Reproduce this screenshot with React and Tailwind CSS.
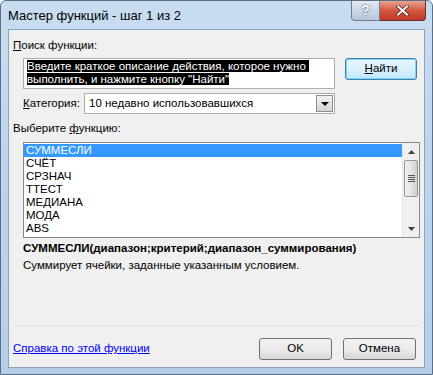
import React from "react";

const F = { fontFamily: '"Liberation Sans", Arial, sans-serif' };

function ArrowUp() {
  return (
    <svg width="7" height="4" viewBox="0 0 7 4"><path d="M0 4 L3.5 0 L7 4 Z" fill="#404040" /></svg>
  );
}
function ArrowDown() {
  return (
    <svg width="7" height="4" viewBox="0 0 7 4"><path d="M0 0 L3.5 4 L7 0 Z" fill="#404040" /></svg>
  );
}

export default function App() {
  const items = ["СУММЕСЛИ", "СЧЁТ", "СРЗНАЧ", "ТТЕСТ", "МЕДИАНА", "МОДА", "ABS"];
  return (
    <div className="w-[433px] h-[375px] bg-white" style={F}>
      <div className="relative w-[433px] h-[375px] rounded-t-[6px] border border-[#5a6f86] bg-gradient-to-b from-[#c9ddf1] via-[#bcd3ec] to-[#b6cfe9] text-[11.5px] text-black">
        {/* title bar */}
        <div className="flex h-[28px] items-start">
          <div className="pl-[7px] pt-[7px] text-[13px] leading-[16px] text-black whitespace-nowrap">Мастер функций - шаг 1 из 2</div>
          <div className="ml-auto mr-[6px] flex h-[20px]">
            <div className="flex w-[29px] items-center justify-center rounded-bl-[4px] border border-t-0 border-[#6f7f92] bg-gradient-to-b from-[#e3ebf4] via-[#cbd7e4] to-[#b7c7d9] text-[14px] font-bold text-white [text-shadow:0_0_2px_#333]">?</div>
            <div className="flex w-[46px] items-center justify-center rounded-br-[4px] border border-t-0 border-l-0 border-[#6e2a24] bg-gradient-to-b from-[#e8a493] via-[#d2553f] to-[#c0392b]">
              <svg width="13" height="11" viewBox="0 0 13 11">
                <path d="M2 1.5 L11 9.5 M11 1.5 L2 9.5" stroke="#4a1a14" strokeWidth="3.4" strokeLinecap="square" />
                <path d="M2 1.5 L11 9.5 M11 1.5 L2 9.5" stroke="#ffffff" strokeWidth="2" strokeLinecap="square" />
              </svg>
            </div>
          </div>
        </div>
        {/* client */}
        <div className="mx-[7px] h-[339px] border border-[#8da2bd] bg-[#f0f0f0] relative whitespace-nowrap">
          <div className="pl-[4px] pt-[8px] leading-[15px]"><span className="underline">П</span>оиск функции:</div>
          <div className="mt-[5px] flex items-start pl-[14px]">
            <div className="h-[31px] w-[312px] border border-[#abadb3] bg-white px-[3px] pt-[1px] leading-[13px]">
              <span className="bg-black text-white">Введите краткое описание действия, которое нужно&nbsp;</span>
              <br />
              <span className="bg-black text-white">выполнить, и нажмите кнопку "Найти"</span>
            </div>
            <div className="ml-[10px] flex h-[22px] w-[72px] items-center justify-center rounded-[3px] border border-[#3c7fb1] bg-gradient-to-b from-[#eaf6fd] via-[#d9f0fc] to-[#bee6fd] shadow-[inset_0_0_0_1px_#7fd4f5]">
              <span><span className="underline">Н</span>айти</span>
            </div>
          </div>
          <div className="mt-[4px] flex items-center pl-[14px]">
            <div className="w-[61px]"><span className="underline">К</span>атегория:</div>
            <div className="flex h-[21px] w-[251px] items-center border border-[#abadb3] bg-white pl-[4px]">
              <span>10 недавно использовавшихся</span>
              <div className="ml-auto mr-[1px] flex h-[17px] w-[17px] items-center justify-center border border-[#8e8f8f] bg-gradient-to-b from-[#f2f2f2] to-[#d4d4d4]">
                <svg width="8" height="4" viewBox="0 0 8 4"><path d="M0 0 L4 4 L8 0 Z" fill="#000" /></svg>
              </div>
            </div>
          </div>
          <div className="mt-[7px] pl-[4px] leading-[15px]">Выберите <span className="underline">ф</span>ункцию:</div>
          <div className="ml-[14px] mt-[6px] flex h-[96px] w-[397px] border border-[#828790] bg-white">
            <div className="flex-1 pt-[1px]">
              {items.map((t, i) => (
                <div key={t} className={"h-[13px] pl-[2px] leading-[13px] " + (i === 0 ? "bg-[#3399ff] text-white" : "")}>{t}</div>
              ))}
            </div>
            <div className="flex w-[17px] flex-col bg-[#f0f0f0] border-l border-[#e8e8e8]">
              <div className="flex h-[17px] items-center justify-center"><ArrowUp /></div>
              <div className="mx-[1px] flex h-[37px] items-center justify-center rounded-[2px] border border-[#979797] bg-gradient-to-r from-[#f0f0f0] via-[#e4e4e4] to-[#cfcfcf]">
                <div className="flex flex-col gap-[1px]">
                  <div className="h-[1px] w-[7px] bg-[#555]" />
                  <div className="h-[1px] w-[7px] bg-[#555]" />
                  <div className="h-[1px] w-[7px] bg-[#555]" />
                  <div className="h-[1px] w-[7px] bg-[#555]" />
                </div>
              </div>
              <div className="flex-1" />
              <div className="flex h-[17px] items-center justify-center"><ArrowDown /></div>
            </div>
          </div>
          <div className="mt-[3px] pl-[14px] font-bold leading-[15px]">СУММЕСЛИ(диапазон;критерий;диапазон_суммирования)</div>
          <div className="mt-[2px] pl-[14px] leading-[15px]">Суммирует ячейки, заданные указанным условием.</div>
          <div className="ml-[5px] mt-[52px] h-[1px] w-[404px] bg-[#dfdfdf]" />
          <div className="mt-[12px] flex items-center pl-[4px] pr-[8px]">
            <span className="text-[#0000ff] underline">Справка по этой функции</span>
            <div className="ml-auto flex h-[22px] w-[73px] items-center justify-center rounded-[3px] border border-[#707070] bg-gradient-to-b from-[#f2f2f2] via-[#ebebeb] to-[#d6d6d6]">OK</div>
            <div className="ml-[11px] flex h-[22px] w-[73px] items-center justify-center rounded-[3px] border border-[#707070] bg-gradient-to-b from-[#f2f2f2] via-[#ebebeb] to-[#d6d6d6]">Отмена</div>
          </div>
        </div>
      </div>
    </div>
  );
}
